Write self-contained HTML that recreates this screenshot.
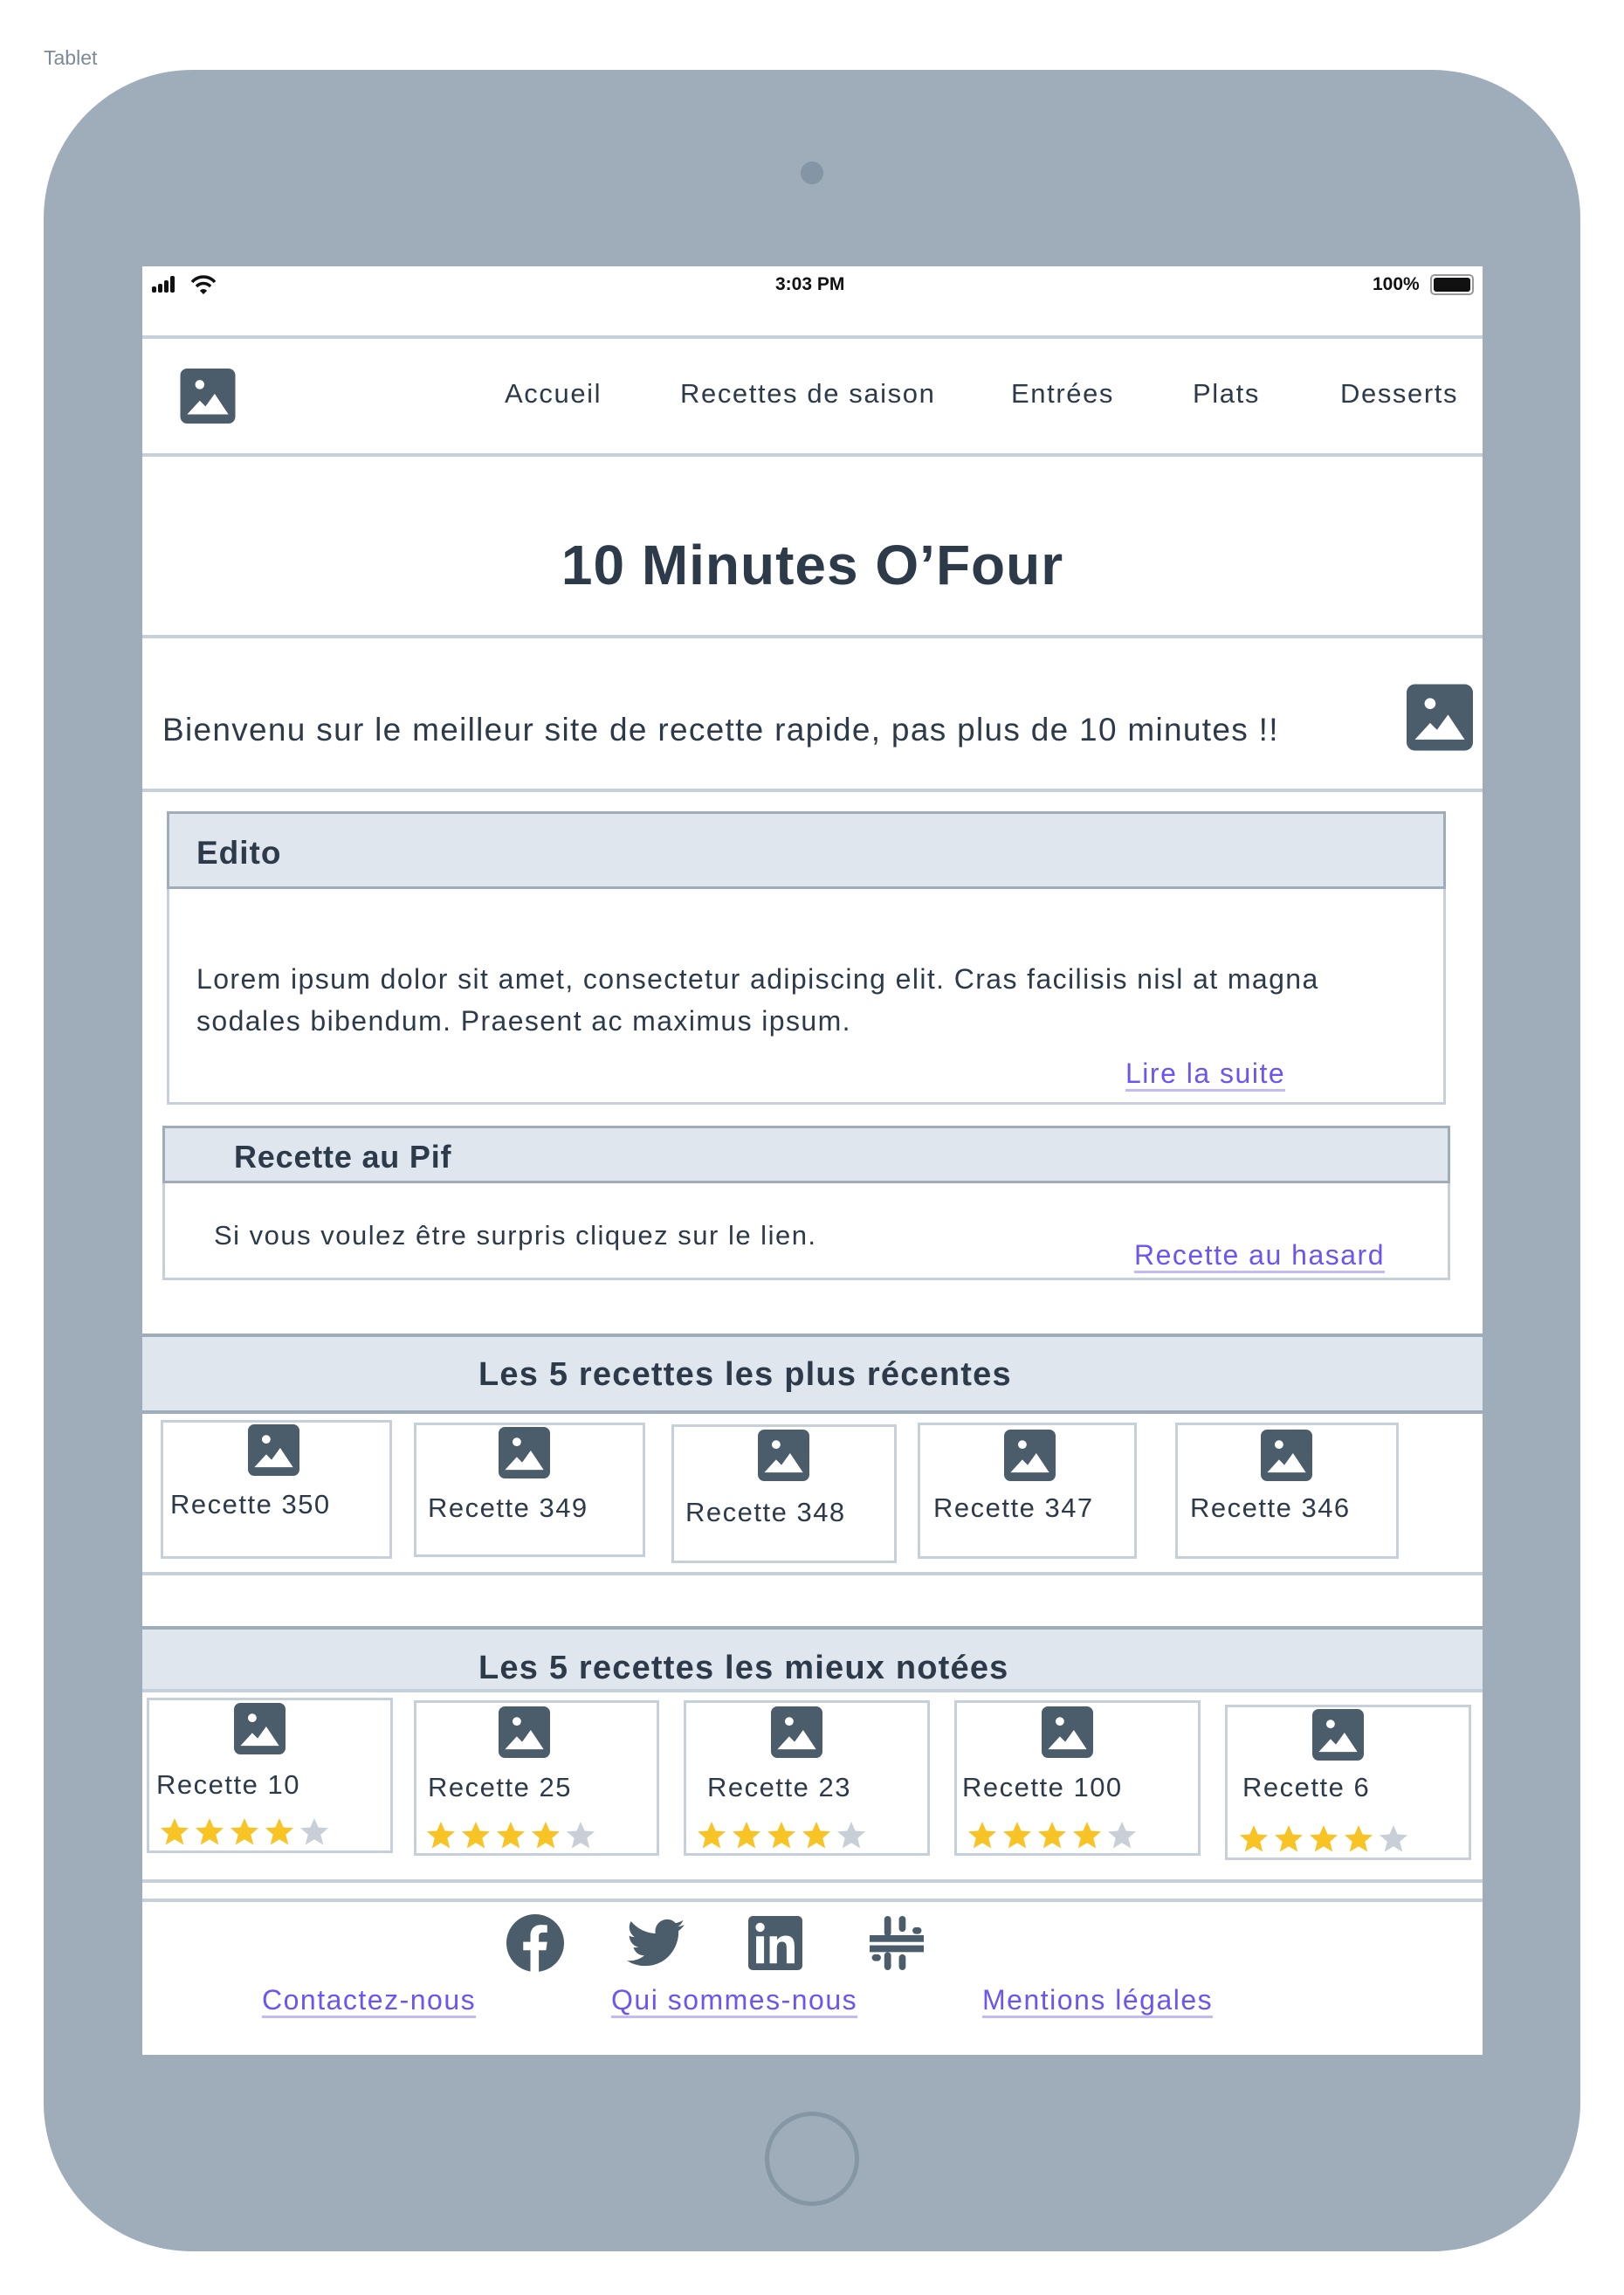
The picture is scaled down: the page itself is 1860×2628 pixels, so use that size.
<!DOCTYPE html>
<html><head><meta charset="utf-8"><style>
*{margin:0;padding:0;box-sizing:border-box}
body{width:1860px;height:2628px;background:#fff;position:relative;overflow:hidden;font-family:"Liberation Sans",sans-serif;color:#2d3a4a}
.a{position:absolute;white-space:nowrap}
.ic{position:absolute}
.ln{position:absolute;left:163px;width:1535px;height:4px;background:#c5d0da}
.lk{color:#6c55f0;border-bottom:3px solid #c4b9f7;line-height:1.1;letter-spacing:1.5px}
.card{position:absolute;border:3px solid #c5d0da;background:#fff}
.hd{position:absolute;background:#dfe6ee}
.ct{font-size:31px;letter-spacing:1.5px}
.nv{font-size:31px;letter-spacing:1.6px}
</style></head><body>
<div class="a" style="left:50px;top:53px;font-size:23px;color:#7b8a98">Tablet</div>
<div style="position:absolute;left:50px;top:80px;width:1760px;height:2498px;background:#9eadb9;border-radius:170px"></div>
<div style="position:absolute;left:917px;top:185px;width:26px;height:26px;border-radius:50%;background:#8495a5"></div>
<div style="position:absolute;left:876px;top:2418px;width:108px;height:108px;border-radius:50%;border:5px solid #8596a4"></div>
<div style="position:absolute;left:163px;top:305px;width:1535px;height:2048px;background:#fff"></div>

<!-- status -->
<svg class="ic" style="left:173px;top:314px" width="32" height="24" viewBox="0 0 32 24"><rect x="1" y="14" width="5" height="7" rx="2" fill="#111"/><rect x="8" y="11" width="5" height="10" rx="2" fill="#111"/><rect x="15" y="7" width="5" height="14" rx="2" fill="#111"/><rect x="22" y="2" width="5" height="19" rx="2" fill="#111"/></svg>
<svg class="ic" style="left:218px;top:314px" width="30" height="24" viewBox="0 0 30 24"><path d="M2 9 A17 17 0 0 1 28 9" stroke="#111" stroke-width="3.5" fill="none"/><path d="M7 14 A11 11 0 0 1 23 14" stroke="#111" stroke-width="3.5" fill="none"/><path d="M11 19 L15 23 L19 19 A5 5 0 0 0 11 19Z" fill="#111"/></svg>
<div class="a" style="left:888px;top:314px;font-size:21px;color:#111;font-weight:bold">3:03 PM</div>
<div class="a" style="left:1572px;top:314px;font-size:21px;color:#111;font-weight:bold">100%</div>
<div style="position:absolute;left:1638px;top:314px;width:50px;height:24px;border:2px solid #999;border-radius:5px;padding:2px"><div style="width:100%;height:100%;background:#111;border-radius:3px"></div></div>

<div class="ln" style="top:384px"></div>
<svg class="ic" style="left:206px;top:422px" width="64" height="63" viewBox="0 0 24 24"><rect width="24" height="24" rx="3" fill="#4b5c6b"/><circle cx="8.5" cy="7" r="2" fill="#fff"/><path d="M3 20 L8.5 14 L11 16.5 L15 11 L21 20Z" fill="#fff"/></svg>
<div class="a nv" style="left:578px;top:433px">Accueil</div>
<div class="a nv" style="left:779px;top:433px">Recettes de saison</div>
<div class="a nv" style="left:1158px;top:433px">Entrées</div>
<div class="a nv" style="left:1366px;top:433px">Plats</div>
<div class="a nv" style="left:1535px;top:433px">Desserts</div>
<div class="ln" style="top:519px"></div>
<div class="a" style="left:163px;width:1535px;text-align:center;top:610px;font-size:64px;font-weight:bold;letter-spacing:1px">10 Minutes O’Four</div>
<div class="ln" style="top:727px"></div>
<div class="a" style="left:186px;top:815px;font-size:37px;letter-spacing:1.3px">Bienvenu sur le meilleur site de recette rapide, pas plus de 10 minutes !!</div>
<svg class="ic" style="left:1611px;top:783px" width="76" height="77" viewBox="0 0 24 24"><rect width="24" height="24" rx="3" fill="#4b5c6b"/><circle cx="8.5" cy="7" r="2" fill="#fff"/><path d="M3 20 L8.5 14 L11 16.5 L15 11 L21 20Z" fill="#fff"/></svg>
<div class="ln" style="top:903px"></div>

<!-- Edito -->
<div style="position:absolute;left:191px;top:929px;width:1465px;height:336px;border:3px solid #c5d0da"></div>
<div class="hd" style="left:191px;top:929px;width:1465px;height:89px;border:3px solid #9eadb9"></div>
<div class="a" style="left:225px;top:956px;font-size:37px;font-weight:bold;letter-spacing:1px">Edito</div>
<div class="a" style="left:225px;top:1097px;font-size:32px;line-height:48px;letter-spacing:1.4px">Lorem ipsum dolor sit amet, consectetur adipiscing elit. Cras facilisis nisl at magna<br>sodales bibendum. Praesent ac maximus ipsum.</div>
<div class="a lk" style="left:1289px;top:1212px;font-size:32px">Lire la suite</div>

<!-- Pif -->
<div style="position:absolute;left:186px;top:1289px;width:1475px;height:177px;border:3px solid #c5d0da"></div>
<div class="hd" style="left:186px;top:1289px;width:1475px;height:66px;border:3px solid #9eadb9"></div>
<div class="a" style="left:268px;top:1304px;font-size:36px;font-weight:bold;letter-spacing:0.8px">Recette au Pif</div>
<div class="a" style="left:245px;top:1397px;font-size:31px;letter-spacing:1.5px">Si vous voulez être surpris cliquez sur le lien.</div>
<div class="a lk" style="left:1299px;top:1420px;font-size:32px">Recette au hasard</div>

<!-- recent -->
<div class="hd" style="left:163px;top:1527px;width:1535px;height:92px;border-top:4px solid #9eadb9;border-bottom:4px solid #9eadb9"></div>
<div class="a" style="left:548px;top:1553px;font-size:38px;font-weight:bold;letter-spacing:1.2px">Les 5 recettes les plus récentes</div>
<div class="ln" style="top:1800px"></div>

<div class="card" style="left:184px;top:1626px;width:265px;height:159px"></div>
<div class="card" style="left:474px;top:1629px;width:265px;height:154px"></div>
<div class="card" style="left:769px;top:1631px;width:258px;height:159px"></div>
<div class="card" style="left:1051px;top:1629px;width:251px;height:156px"></div>
<div class="card" style="left:1346px;top:1629px;width:256px;height:156px"></div>
<svg class="ic" style="left:284px;top:1631px" width="59" height="59" viewBox="0 0 24 24"><rect width="24" height="24" rx="3" fill="#4b5c6b"/><circle cx="8.5" cy="7" r="2" fill="#fff"/><path d="M3 20 L8.5 14 L11 16.5 L15 11 L21 20Z" fill="#fff"/></svg>
<svg class="ic" style="left:571px;top:1634px" width="59" height="59" viewBox="0 0 24 24"><rect width="24" height="24" rx="3" fill="#4b5c6b"/><circle cx="8.5" cy="7" r="2" fill="#fff"/><path d="M3 20 L8.5 14 L11 16.5 L15 11 L21 20Z" fill="#fff"/></svg>
<svg class="ic" style="left:868px;top:1637px" width="59" height="59" viewBox="0 0 24 24"><rect width="24" height="24" rx="3" fill="#4b5c6b"/><circle cx="8.5" cy="7" r="2" fill="#fff"/><path d="M3 20 L8.5 14 L11 16.5 L15 11 L21 20Z" fill="#fff"/></svg>
<svg class="ic" style="left:1150px;top:1637px" width="59" height="59" viewBox="0 0 24 24"><rect width="24" height="24" rx="3" fill="#4b5c6b"/><circle cx="8.5" cy="7" r="2" fill="#fff"/><path d="M3 20 L8.5 14 L11 16.5 L15 11 L21 20Z" fill="#fff"/></svg>
<svg class="ic" style="left:1444px;top:1637px" width="59" height="59" viewBox="0 0 24 24"><rect width="24" height="24" rx="3" fill="#4b5c6b"/><circle cx="8.5" cy="7" r="2" fill="#fff"/><path d="M3 20 L8.5 14 L11 16.5 L15 11 L21 20Z" fill="#fff"/></svg>
<div class="a ct" style="left:195px;top:1705px">Recette 350</div>
<div class="a ct" style="left:490px;top:1709px">Recette 349</div>
<div class="a ct" style="left:785px;top:1714px">Recette 348</div>
<div class="a ct" style="left:1069px;top:1709px">Recette 347</div>
<div class="a ct" style="left:1363px;top:1709px">Recette 346</div>

<!-- best -->
<div class="hd" style="left:163px;top:1862px;width:1535px;height:76px;border-top:4px solid #9eadb9;border-bottom:4px solid #c5d0da"></div>
<div class="a" style="left:548px;top:1889px;font-size:38px;font-weight:bold;letter-spacing:1.2px">Les 5 recettes les mieux notées</div>
<div class="ln" style="top:2152px"></div>
<div class="ln" style="top:2174px;height:3px"></div>

<div class="card" style="left:168px;top:1944px;width:282px;height:178px"></div>
<div class="card" style="left:474px;top:1947px;width:281px;height:178px"></div>
<div class="card" style="left:783px;top:1947px;width:282px;height:178px"></div>
<div class="card" style="left:1093px;top:1947px;width:282px;height:178px"></div>
<div class="card" style="left:1403px;top:1952px;width:282px;height:178px"></div>
<svg class="ic" style="left:268px;top:1950px" width="59" height="59" viewBox="0 0 24 24"><rect width="24" height="24" rx="3" fill="#4b5c6b"/><circle cx="8.5" cy="7" r="2" fill="#fff"/><path d="M3 20 L8.5 14 L11 16.5 L15 11 L21 20Z" fill="#fff"/></svg>
<svg class="ic" style="left:571px;top:1954px" width="59" height="59" viewBox="0 0 24 24"><rect width="24" height="24" rx="3" fill="#4b5c6b"/><circle cx="8.5" cy="7" r="2" fill="#fff"/><path d="M3 20 L8.5 14 L11 16.5 L15 11 L21 20Z" fill="#fff"/></svg>
<svg class="ic" style="left:883px;top:1954px" width="59" height="59" viewBox="0 0 24 24"><rect width="24" height="24" rx="3" fill="#4b5c6b"/><circle cx="8.5" cy="7" r="2" fill="#fff"/><path d="M3 20 L8.5 14 L11 16.5 L15 11 L21 20Z" fill="#fff"/></svg>
<svg class="ic" style="left:1193px;top:1954px" width="59" height="59" viewBox="0 0 24 24"><rect width="24" height="24" rx="3" fill="#4b5c6b"/><circle cx="8.5" cy="7" r="2" fill="#fff"/><path d="M3 20 L8.5 14 L11 16.5 L15 11 L21 20Z" fill="#fff"/></svg>
<svg class="ic" style="left:1503px;top:1957px" width="59" height="59" viewBox="0 0 24 24"><rect width="24" height="24" rx="3" fill="#4b5c6b"/><circle cx="8.5" cy="7" r="2" fill="#fff"/><path d="M3 20 L8.5 14 L11 16.5 L15 11 L21 20Z" fill="#fff"/></svg>
<div class="a ct" style="left:179px;top:2026px">Recette 10</div>
<div class="a ct" style="left:490px;top:2029px">Recette 25</div>
<div class="a ct" style="left:810px;top:2029px">Recette 23</div>
<div class="a ct" style="left:1102px;top:2029px">Recette 100</div>
<div class="a ct" style="left:1423px;top:2029px">Recette 6</div>

<svg width="0" height="0" style="position:absolute"><defs><polygon id="st" points="16,0 20.6,10.5 32,11.3 23.3,18.8 26.2,30.5 16,24.2 5.8,30.5 8.7,18.8 0,11.3 11.4,10.5"/></defs></svg>
<svg class="ic" style="left:184px;top:2082px" width="200" height="32" viewBox="0 0 200 32"><use href="#st" fill="#f7c325"/><use href="#st" x="40" fill="#f7c325"/><use href="#st" x="80" fill="#f7c325"/><use href="#st" x="120" fill="#f7c325"/><use href="#st" x="160" fill="#c8cfd6"/></svg>
<svg class="ic" style="left:489px;top:2086px" width="200" height="32" viewBox="0 0 200 32"><use href="#st" fill="#f7c325"/><use href="#st" x="40" fill="#f7c325"/><use href="#st" x="80" fill="#f7c325"/><use href="#st" x="120" fill="#f7c325"/><use href="#st" x="160" fill="#c8cfd6"/></svg>
<svg class="ic" style="left:799px;top:2086px" width="200" height="32" viewBox="0 0 200 32"><use href="#st" fill="#f7c325"/><use href="#st" x="40" fill="#f7c325"/><use href="#st" x="80" fill="#f7c325"/><use href="#st" x="120" fill="#f7c325"/><use href="#st" x="160" fill="#c8cfd6"/></svg>
<svg class="ic" style="left:1109px;top:2086px" width="200" height="32" viewBox="0 0 200 32"><use href="#st" fill="#f7c325"/><use href="#st" x="40" fill="#f7c325"/><use href="#st" x="80" fill="#f7c325"/><use href="#st" x="120" fill="#f7c325"/><use href="#st" x="160" fill="#c8cfd6"/></svg>
<svg class="ic" style="left:1420px;top:2090px" width="200" height="32" viewBox="0 0 200 32"><use href="#st" fill="#f7c325"/><use href="#st" x="40" fill="#f7c325"/><use href="#st" x="80" fill="#f7c325"/><use href="#st" x="120" fill="#f7c325"/><use href="#st" x="160" fill="#c8cfd6"/></svg>

<!-- footer -->
<div class="ln" style="top:2175px;height:3px;background:#c5d0da"></div>
<svg class="ic" style="left:580px;top:2192px" width="66" height="66" viewBox="0 0 24 24"><circle cx="12" cy="12" r="12" fill="#4b5c6b"/><path d="M13.5 24V15h3l.5-3.5h-3.5V9.3c0-1 .3-1.7 1.8-1.7H17V4.5c-.3 0-1.4-.1-2.6-.1-2.6 0-4.4 1.6-4.4 4.5v2.6H7V15h3v9z" fill="#fff"/></svg>
<svg class="ic" style="left:718px;top:2197px" width="66" height="56" viewBox="0 0 24 20"><path d="M24 2.4c-.9.4-1.8.6-2.8.8 1-.6 1.8-1.6 2.2-2.7-1 .6-2 1-3.1 1.2A4.9 4.9 0 0 0 11.9 6 14 14 0 0 1 1.7.9a4.9 4.9 0 0 0 1.5 6.6c-.8 0-1.6-.2-2.2-.6 0 2.4 1.7 4.4 3.9 4.8-.7.2-1.5.2-2.2.1.6 2 2.4 3.4 4.6 3.4A9.9 9.9 0 0 1 0 17.3 14 14 0 0 0 7.5 19.5c9.1 0 14-7.5 14-14v-.6c1-.7 1.8-1.6 2.5-2.5z" fill="#4b5c6b"/></svg>
<svg class="ic" style="left:857px;top:2193px" width="62" height="64" viewBox="0 0 24 24"><rect width="24" height="24" rx="2" fill="#4b5c6b"/><rect x="3.5" y="9" width="3.5" height="12" fill="#fff"/><circle cx="5.25" cy="5" r="2" fill="#fff"/><path d="M9.5 9h3.3v1.7c.6-1 1.8-2 3.7-2 3.5 0 4 2.3 4 5.2V21h-3.5v-6.3c0-1.5 0-3.3-2-3.3s-2.3 1.5-2.3 3.2V21H9.5z" fill="#fff"/></svg>
<svg class="ic" style="left:996px;top:2194px" width="62" height="62" viewBox="0 0 24 24" fill="#4b5c6b"><rect x="6.5" y="0" width="3" height="9" rx="1.5"/><rect x="13" y="0" width="3" height="7" rx="1.5"/><rect x="0" y="8.5" width="24" height="3"/><rect x="0" y="13" width="24" height="3"/><rect x="6.5" y="16" width="3" height="8" rx="1.5"/><rect x="13" y="17" width="3" height="7" rx="1.5"/><rect x="19" y="5" width="4" height="3" rx="1.5"/><rect x="1" y="17" width="4" height="3" rx="1.5"/></svg>
<div class="a lk" style="left:300px;top:2273px;font-size:32px">Contactez-nous</div>
<div class="a lk" style="left:700px;top:2273px;font-size:32px">Qui sommes-nous</div>
<div class="a lk" style="left:1125px;top:2273px;font-size:32px">Mentions légales</div>
</body></html>
